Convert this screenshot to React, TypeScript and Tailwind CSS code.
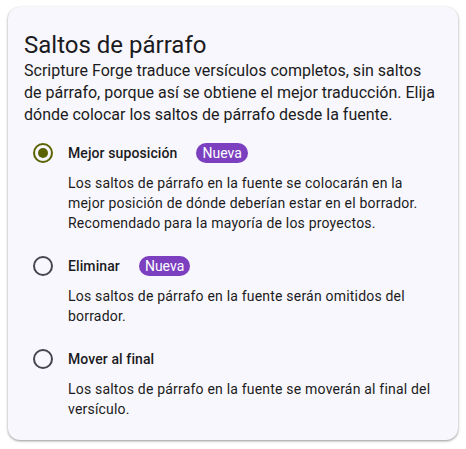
import React from "react";

function Radio({ checked }: { checked?: boolean }) {
  return checked ? (
    <svg width="20" height="20" viewBox="0 0 20 20" className="shrink-0">
      <circle cx="10" cy="10" r="9" fill="none" stroke="#5b6300" strokeWidth="2" />
      <circle cx="10" cy="10" r="5" fill="#5b6300" />
    </svg>
  ) : (
    <svg width="20" height="20" viewBox="0 0 20 20" className="shrink-0">
      <circle cx="10" cy="10" r="9" fill="none" stroke="#46464f" strokeWidth="2" />
    </svg>
  );
}

function Option({
  label,
  badge,
  checked,
  children,
}: {
  label: string;
  badge?: boolean;
  checked?: boolean;
  children: React.ReactNode;
}) {
  return (
    <div className="flex flex-col">
      <div className="flex items-center h-[40px]">
        <div className="w-[40px] h-[40px] flex items-center justify-center ml-[-1px]">
          <Radio checked={checked} />
        </div>
        <span className="ml-[5px] text-[14px] font-medium tracking-[0.1px] text-[#1b1b21]">{label}</span>
        {badge && (
          <span className="ml-[19px] rounded-full bg-[#7b3fbf] text-white text-[14px] leading-[20px] px-[6px]">
            Nueva
          </span>
        )}
      </div>
      <p className="pl-[44px] pr-[6px] text-[14px] leading-[20px] tracking-[0.2px] text-[#1b1b21]">{children}</p>
    </div>
  );
}

export default function App() {
  return (
    <div className="px-[8px] pt-[7px] pb-[9px]" style={{ fontFamily: "Roboto, sans-serif" }}>
      <div className="rounded-[12px] bg-[#f8f7fd] shadow-[0_1px_3px_rgba(0,0,0,0.3),0_1px_2px_rgba(0,0,0,0.15)] px-[16px] pt-[23px] pb-[21px]">
        <h2 className="text-[24px] leading-[30px] text-[#1b1b21]">Saltos de párrafo</h2>
        <p className="text-[16px] leading-[22px] text-[#1b1b21]">
          Scripture Forge traduce versículos completos, sin saltos de párrafo, porque así se obtiene el
          mejor traducción. Elija dónde colocar los saltos de párrafo desde la fuente.
        </p>
        <div className="mt-[7px] flex flex-col gap-[13px]">
          <Option label="Mejor suposición" badge checked>
            Los saltos de párrafo en la fuente se colocarán en la mejor posición de dónde deberían estar en el
            borrador. Recomendado para la mayoría de los proyectos.
          </Option>
          <Option label="Eliminar" badge>
            Los saltos de párrafo en la fuente serán omitidos del borrador.
          </Option>
          <Option label="Mover al final">
            Los saltos de párrafo en la fuente se moverán al final del versículo.
          </Option>
        </div>
      </div>
    </div>
  );
}
